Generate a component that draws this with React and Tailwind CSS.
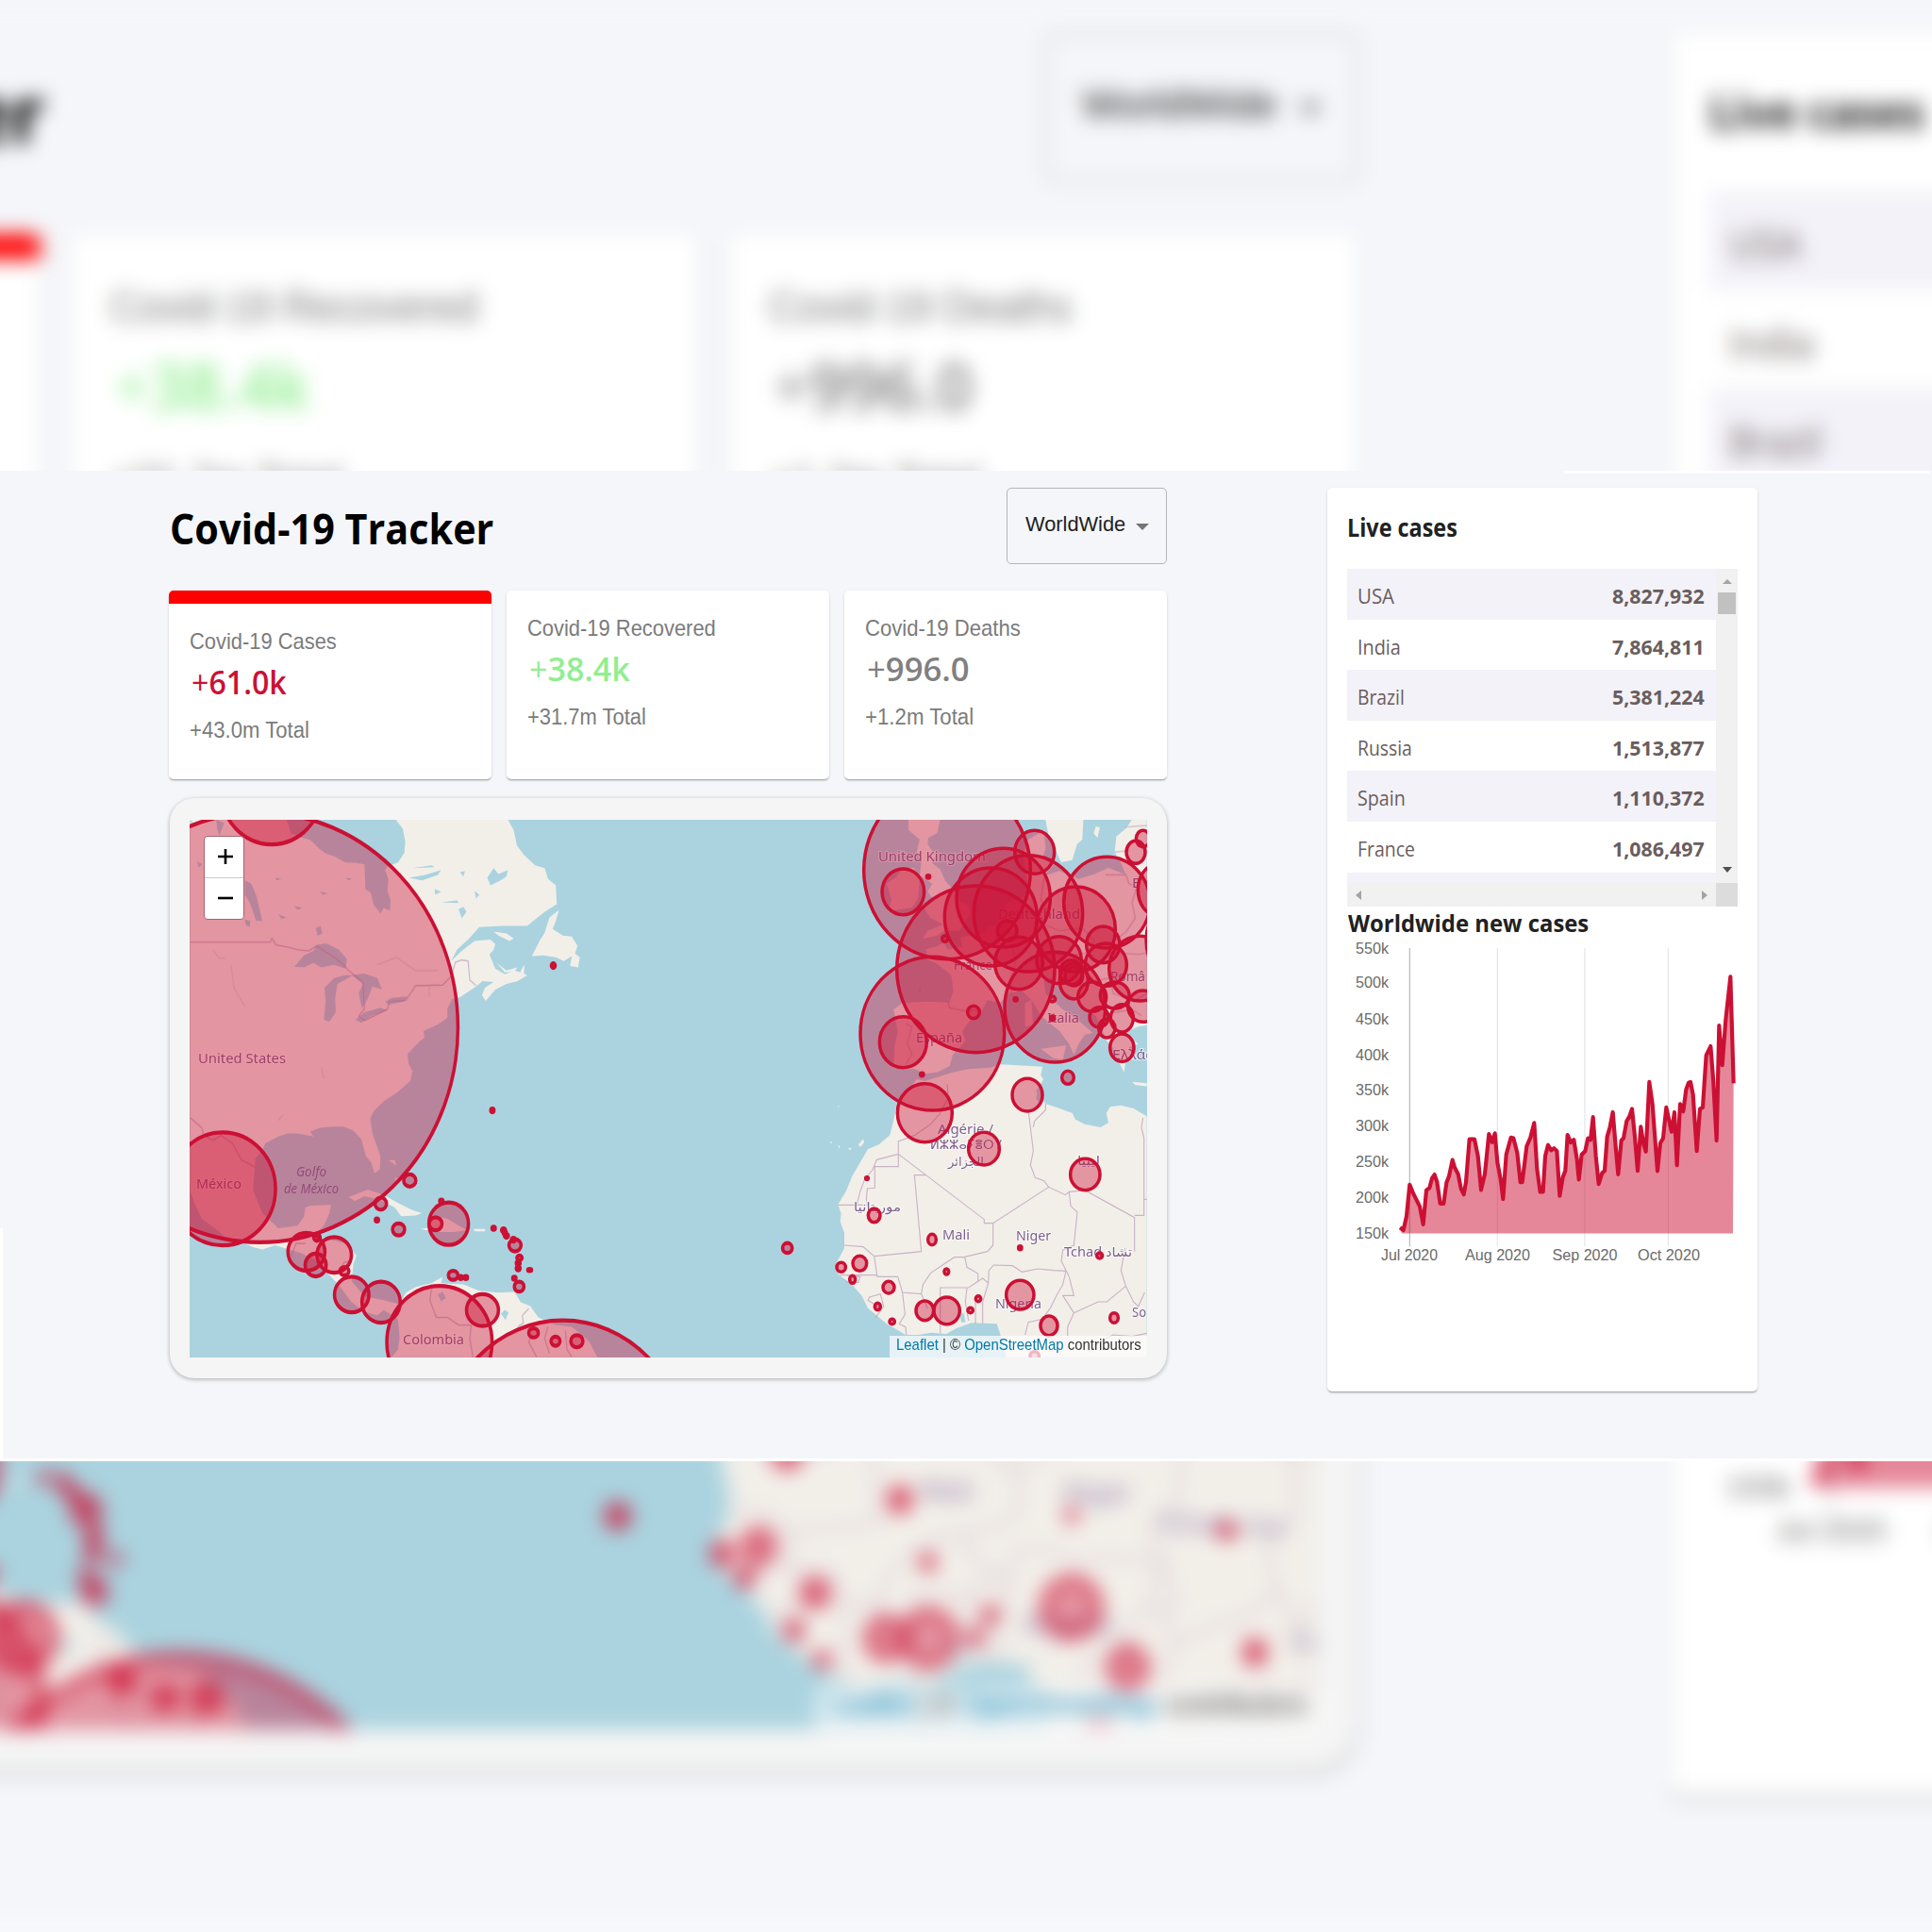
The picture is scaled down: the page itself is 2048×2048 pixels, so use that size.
import React, { useLayoutEffect, useRef } from "react";

/* A line of text squeezed or stretched horizontally to a known width. */
function Fit({ w, className = "", children }) {
  const ref = useRef(null);
  useLayoutEffect(() => {
    const el = ref.current;
    if (el && el.offsetWidth) el.style.transform = `scaleX(${w / el.offsetWidth})`;
  }, [w]);
  return (
    <div className="flex">
      <span ref={ref} className={"inline-block origin-left whitespace-nowrap " + className}>
        {children}
      </span>
    </div>
  );
}

function Card({ title, titleW, value, valueW, total, totalW, color, active }) {
  return (
    <div
      className={
        "h-[200px] flex-1 rounded-[5px] bg-white pl-[22px] shadow-[0_2px_2px_-1px_rgba(0,0,0,0.3),0_1px_3px_rgba(0,0,0,0.12)] " +
        (active ? "border-t-[14px] border-[#ff0000]" : "")
      }
    >
      <div className="h-[26px] pt-[27px] box-content font-['Liberation_Sans',sans-serif] text-[24px] leading-[26px] text-[#7b7b7b]">
        <Fit w={titleW}>{title}</Fit>
      </div>
      <div className={"mt-[8px] ml-[2px] font-['Open_Sans',sans-serif] text-[35px] font-semibold leading-[44px] " + color}>
        <Fit w={valueW}>
          <span className="font-normal">+</span>
          {value}
        </Fit>
      </div>
      <div className="mt-[16px] font-['Liberation_Sans',sans-serif] text-[23px] leading-[26px] text-[#7b7b7b]">
        <Fit w={totalW}>{total}</Fit>
      </div>
    </div>
  );
}

const AMERICAS = [
  [311, 620, 622, 567], [349, -7, 160, 144], [195, 1046, 166, 149], [458, 1212, 58, 50], [491, 1174, 10, 9],
  [545, 1220, 54, 47], [487, 1247, 33, 30], [577, 1263, 14, 11], [600, 1325, 54, 47], [692, 1345, 60, 54],
  [875, 1451, 165, 149], [1010, 1366, 50, 42], [1262, 1739, 384, 346], [782, 1024, 19, 16], [691, 1085, 18, 16],
  [679, 1128, 5, 4], [747, 1153, 19, 16], [881, 1078, 5, 4], [904, 1138, 62, 56], [863, 1138, 20, 17],
  [1045, 1150, 5, 4], [1076, 1155, 6, 5], [1085, 1170, 6, 5], [1080, 1162, 5, 4], [1112, 1195, 19, 16], [1107, 1180, 6, 5],
  [1126, 1228, 8, 6], [1122, 1242, 6, 5], [1122, 1256, 6, 5], [1158, 1260, 6, 3], [1110, 1282, 5, 4], [1125, 1304, 15, 13],
  [918, 1274, 15, 12], [942, 1280, 6, 4], [958, 1280, 5, 4], [1170, 1426, 15, 12], [1239, 1448, 14, 12],
  [1306, 1448, 19, 16], [1232, 457, 6, 6], [1041, 839, 5, 5], [1966, 1202, 15, 13],
];
const EUROPE = [
  [432, 247, 265, 283], [292, 316, 67, 73], [372, 268, 5, 5], [710, 190, 63, 69], [611, 335, 149, 157],
  [571, 396, 147, 156], [690, 385, 173, 185], [523, 562, 251, 265], [385, 767, 229, 244], [292, 794, 75, 81],
  [775, 683, 160, 175], [660, 543, 76, 83], [623, 440, 31, 32], [788, 533, 71, 75], [841, 435, 126, 135],
  [940, 350, 137, 145], [928, 484, 53, 58], [937, 548, 66, 68], [827, 572, 36, 39], [835, 600, 45, 57],
  [835, 585, 28, 30], [893, 650, 45, 47], [1045, 560, 98, 103], [965, 645, 46, 42], [915, 715, 30, 32], [940, 750, 26, 30],
  [988, 718, 36, 44], [1055, 680, 48, 50], [988, 812, 38, 44], [1032, 190, 30, 36], [1055, 147, 22, 26],
  [1097, 310, 58, 80], [1200, 470, 135, 150], [425, 465, 9, 10], [650, 658, 5, 5], [767, 657, 9, 9],
  [767, 718, 6, 7], [516, 699, 19, 20], [352, 897, 5, 5], [816, 907, 19, 21],
];
const AFRICA = [
  [687, 62, 48, 52], [361, 119, 87, 93], [549, 233, 49, 52], [871, 315, 47, 50], [177, 327, 4, 4], [200, 445, 19, 22],
  [384, 522, 13, 17], [664, 548, 5, 6], [917, 573, 9, 9], [154, 598, 22, 24], [95, 610, 14, 15], [131, 649, 9, 12],
  [246, 674, 18, 19], [211, 735, 9, 11], [257, 783, 8, 8], [361, 748, 28, 31], [431, 748, 41, 43], [430, 624, 7, 9],
  [506, 747, 8, 8], [531, 710, 8, 9], [664, 698, 44, 46], [756, 796, 27, 31], [963, 771, 13, 16], [710, 892, 14, 14],
];

const LABELS = [
  ["United States", 210, 1127, 93], ["México", 208, 1260, 48], ["Colombia", 427, 1425, 65], ["United Kingdom", 931, 913, 114],
  ["Deutschland", 1058, 974, 87], ["France", 1011, 1028, 41], ["España", 971, 1105, 49], ["Italia", 1110, 1084, 34],
  ["Româ", 1177, 1040, 37], ["E", 1200, 941, 9], ["Ελλάς", 1179, 1123, 43], ["Algérie /", 994, 1202, 59],
  ["ⵍⵣⵣⴰⵢⴻⵔ /", 986, 1218, 76], ["الجزائر", 1005, 1236, 38], ["ليبيا", 1142, 1235, 24], ["موريتانيا", 905, 1284, 50],
  ["Mali", 999, 1314, 29], ["Niger", 1077, 1315, 37], ["Tchad تشاد", 1128, 1332, 72], ["Nigeria", 1055, 1387, 49],
  ["So", 1200, 1396, 15],
];

function Circles({ list }) {
  return list.map(([cx, cy, rx, ry], i) => (
    <ellipse key={i} cx={cx} cy={cy} rx={rx} ry={ry} fill="#CC1034" fillOpacity="0.4" stroke="#CC1034" strokeWidth="10.5" />
  ));
}

const GA = "translate(170 840) scale(.33807 .40177)";
const GB = "translate(860 840) scale(.33333)";
const GC = "translate(860 1140) scale(.33333)";

function WorldMap() {
  return (
    <svg className="block h-[570px] w-[1015px] overflow-hidden" viewBox="201 869 1015 570">
      <rect x="201" y="869" width="1015" height="570" fill="#aad3df" />
      <g transform={GA} fill="#f2efe9">
        <path d="M93 72H395L410 108L440 118L470 125L500 150L520 162L545 168L580 185L615 186L640 190L643 255L660 265L668 295L690 320L700 305L720 312L722 285L712 260L715 230L705 205L712 195L745 185L765 160L768 130L760 95L738 72H1090L1108 100L1118 140L1140 165L1175 192L1205 200L1215 228L1240 245L1243 295L1205 315L1150 352L1070 352L1000 355L965 388L930 415L912 445L945 418L985 392L1035 388L1050 400L1045 415L1032 428L1050 465L1080 480L1110 470L1128 475L1142 453L1140 478L1150 483L1120 498L1085 505L1050 520L1020 550L1008 535L1018 515L1045 500L1010 498L990 512L940 540L915 545L900 570L900 595L870 612L825 630L828 648L815 655L800 668L775 690L778 715L790 735L785 760L745 790L700 815L670 840L658 860L665 900L690 960L688 995L672 1005L660 975L645 960L630 915L605 892L575 882L540 882L500 885L470 895L480 908L430 900L400 900L370 908L330 925L315 950L298 965L290 1050L320 1110L370 1150L430 1143L450 1120L455 1095L470 1090L535 1088L530 1110L515 1140L490 1165L500 1180L545 1182L580 1190L615 1222L605 1245L600 1290L640 1330L700 1340L750 1350L770 1320L800 1305L850 1295L885 1278L880 1295L950 1298L1000 1315L1060 1320L1110 1318L1130 1345L1160 1355L1185 1385L1240 1405L1290 1410L1320 1430L1345 1450L1370 1490H725L745 1470L750 1440L745 1390L700 1365L680 1380L640 1370L600 1345L560 1300L520 1265L480 1230L440 1215L400 1205L360 1195L320 1206L290 1200L250 1185L200 1172L180 1155L130 1125L108 1085L93 1050Z" />
        <path d="M1250 310L1220 330L1205 370L1190 390L1165 432L1200 430L1240 435L1265 445L1290 432L1285 458L1310 462L1315 435L1300 425L1308 405L1290 380L1262 378L1230 360L1240 340ZM1045 367L1085 372L1108 385L1095 392L1060 378ZM1055 450L1085 470L1120 462L1110 473L1080 475ZM590 1068L650 1048L700 1062L750 1085L790 1102L820 1110L800 1116L755 1118L735 1095L690 1075L640 1065L610 1078ZM840 1130L865 1118L900 1125L930 1140L960 1155L920 1160L870 1160L815 1152L845 1148ZM983 1152L1018 1152L1018 1158L985 1158ZM715 970L735 970L740 985ZM735 1015L745 1020L738 1035Z" />
      </g>
      <g transform={GB} fill="#f2efe9">
        <path d="M308 87H410L400 130L372 145L370 165L395 200L385 225L410 245L425 280L460 320L470 345L500 360L505 385L490 410L470 440L420 440L400 455L355 465L370 440L420 420L380 400L360 370L390 345L370 315L385 290L345 265L350 220L335 190L345 150L310 120ZM240 290L270 270L290 240L325 240L345 270L340 335L320 365L245 378L255 340Z" />
        <path d="M365 498L400 490L420 478L435 500L480 490L475 460L540 450L560 430L590 420L610 380L620 350L680 330L690 300L680 240L672 200L690 150L740 120L745 180L735 210L770 230L740 265L790 250L850 275L900 260L945 240L1000 262L985 225L965 190L970 140L1000 115L1020 87H1067V740L1040 745L1015 755L1000 765L1040 800L1010 810L1025 850L1000 850L995 890L975 850L965 820L940 790L925 755L905 710L870 690L830 650L790 620L765 590L740 600L745 640L800 690L850 725L895 765L870 770L850 800L835 835L820 800L790 760L735 715L700 660L670 630L625 640L600 670L560 660L540 700L500 730L480 760L490 790L450 835L440 870L400 890L360 895L330 880L262 875L265 810L275 760L262 690L290 670L370 665L440 668L452 630L445 580L400 545L370 530Z" />
        <path d="M745 87H865L862 150L845 165L830 215L795 222L775 180L755 140ZM905 108L918 112L910 145L898 130ZM680 670L700 660L705 740L680 745ZM730 815L810 805L800 850L770 845ZM1020 920L1067 925V935L1030 930Z" />
      </g>
      <g transform={GC} fill="#f2efe9">
        <path d="M335 12L360 18L450 -10L500 -20L570 -25L600 -35L735 -28L730 0L738 12L715 50L745 90L790 105L830 120L840 140L870 155L920 165L945 150L938 120L950 100L985 95L1025 105L1067 130V896H620L600 820L590 790L510 787L460 805L430 822L380 818L340 825L300 825L240 790L180 740L160 700L125 660L88 635L78 600L105 550L105 500L92 465L95 440L85 410L110 370L130 320L180 235L215 220L250 190L260 150L275 80L300 60Z" />
        <path d="M60 210L66 212L62 218ZM85 222L92 225L88 232ZM118 230L130 232L120 238ZM150 220L165 202L168 212L156 228ZM82 98L88 97L88 101Z" />
        <path d="M720 50L742 70L730 90L715 75ZM470 760L485 755L490 785L478 785Z" fill="#aad3df" />
      </g>
      <g transform={GA} fill="#aad3df">
        <path d="M420 460L450 430L480 418L490 402L520 398L560 415L585 440L580 465L545 455L505 462L480 450L450 462ZM515 515L545 490L580 482L605 482L555 505L548 545L550 580L530 605L513 600L518 550ZM600 482L640 478L680 490L695 520L665 512L650 545L632 570L622 530L635 505ZM612 600L640 580L690 568L712 575L660 590L630 608ZM705 552L725 542L775 538L765 552L715 560ZM265 232L285 240L300 270L320 340L300 338L280 290L265 270ZM265 335L282 340L280 355L268 350ZM488 358L502 352L508 372L492 378ZM93 72L110 85L100 90ZM175 72L200 80L185 115L178 95ZM115 182L132 190L120 198ZM870 1325L885 1318L895 1335L880 1342Z" />
        <path d="M1025 225L1045 200L1060 215L1090 205L1085 222L1060 235L1035 245ZM935 308L950 302L960 315L945 332ZM1068 1375L1080 1365L1092 1372L1082 1392ZM780 225L830 218L880 205L870 218L820 232ZM790 200L850 192L860 197ZM880 290L930 285L935 292ZM940 210L955 208L950 222ZM360 225L380 228L365 232ZM420 300L445 304L430 310ZM500 262L525 266L510 270ZM370 322L395 330L380 334ZM580 225L600 228L590 232ZM400 245L412 248ZM860 255L880 262L862 270ZM985 260L1000 270L990 280ZM700 130L720 125L718 155L705 150Z" />
      </g>
      <g fill="none" stroke="#b89ab8" strokeWidth="3.4" opacity="0.7">
        <g transform={GA}>
          <path d="M93 395H345L350 385L362 402L400 408L430 415L465 418L490 405L545 435L575 455L590 470L635 500L640 570L622 590L640 602L712 572L718 552L770 548L800 510L885 508L912 485L925 448L945 442L965 445L970 495L990 510M93 858L130 885L135 905L165 918L190 905L225 925L255 970L295 988M410 1225L425 1190L455 1190M565 1262L575 1240L600 1235M850 1310L845 1340L865 1385L900 1385L935 1405H975L970 1440L980 1490M1155 1362L1135 1380L1138 1400L1120 1410M1165 1430L1155 1450L1180 1490M1215 1410L1205 1440L1220 1480M1270 1420L1275 1470L1290 1490" />
          <path opacity=".4" d="M165 415L185 438L205 438M222 455L230 515L265 565M505 725L512 755M680 455L740 435L800 470L870 470M843 510V540M370 865L385 850" />
        </g>
        <g transform={GB}>
          <path d="M434 665L440 685L490 695L540 690M300 735L320 745L305 800L320 830L300 865M600 450L640 490L650 540L630 600L640 650M740 270L730 340L760 390L740 420L790 440L860 430L900 470L880 510L820 520L760 510M935 262H1000L1010 290L1035 300L1020 350L1030 400L1000 445L950 480M880 560L920 540L970 510L1040 515L1067 510M900 600L950 590L960 640L1030 660L1067 640M960 700L1020 690L1050 710M965 190L1010 185M1000 110L1067 105M345 620V640" />
        </g>
        <g transform={GC}>
          <path d="M432 28L436 70L410 120L380 155L330 190L277 210V290H202V358L178 360L175 395L180 412H85M277 250L208 268L195 300L170 330L155 370L145 410M277 250L550 458V470H578L755 355L808 380L820 370L870 365L1028 452V560M690 110L700 190L706 240L697 285L712 325L740 335L755 355M745 90V110L710 145L706 165M1055 135L1050 165L1058 200V445H1028M1058 394H1067M365 317H328L350 560L200 575L165 545L105 540M578 470V540L560 560L488 577L455 578L380 628L355 665L350 695L290 690L275 640L210 640L200 575M90 635H210M488 577L495 610L530 630V655L500 675H410V820M495 675L490 720L500 780M530 655L545 645L563 660L545 720V790M522 720V790M563 660L565 620L580 603L640 605L670 625L720 615L770 620L810 622L800 665L780 700L760 740L735 775L690 785L680 825M820 370L825 415L846 435L835 540L800 555L795 590L820 640L835 700L800 700L835 755L912 720H940L1000 670L985 620L998 550M835 755L815 800V830M1000 670L1025 720L1040 735L1060 690M290 690L298 760L280 790L300 800L302 825M220 740L180 715L185 705L220 695L230 735L205 770M1067 820L1020 830L960 825L930 840L880 880M350 695L370 740M110 635L155 640L150 658L110 657" />
        </g>
      </g>
      <g fontFamily="Noto Sans, DejaVu Sans, sans-serif" fontSize="13.5" fill="#7d5f8c" stroke="#ffffff" strokeOpacity=".6" strokeWidth="2" paintOrder="stroke">
        {LABELS.map(([t, x, y, w]) => (
          <text key={t} x={x} y={y} textLength={w} lengthAdjust="spacingAndGlyphs">{t}</text>
        ))}
        <g fontStyle="italic" fill="#6f70ab" strokeOpacity="0">
          <text x="314" y="1247" textLength="32" lengthAdjust="spacingAndGlyphs">Golfo</text>
          <text x="301" y="1265" textLength="58" lengthAdjust="spacingAndGlyphs">de México</text>
        </g>
      </g>
      <g transform={GA}><Circles list={AMERICAS} /></g>
      <g transform={GB}><Circles list={EUROPE} /></g>
      <g transform={GC}><Circles list={AFRICA} /></g>
    </svg>
  );
}

function MapCard() {
  return (
    <div className="mt-[20px] ml-px h-[615px] w-[1057px] rounded-[26px] bg-[#f5f5f5] pt-[23px] pl-[21px] shadow-[0_1px_5px_rgba(0,0,0,0.22),0_2px_4px_rgba(0,0,0,0.08)]">
      <div className="relative h-[570px] w-[1015px] overflow-hidden">
        <WorldMap />
        <div className="absolute top-[17px] left-[15px] h-[89px] w-[43px] divide-y divide-[#cccccc] rounded-[4px] border border-[#a8626f] bg-white">
          {["M1 8H17M9 0V16", "M1 8H17"].map((d) => (
            <div key={d} className="flex h-[43.5px] items-center justify-center pl-[3px]">
              <svg className="h-[16px] w-[18px]" viewBox="0 0 18 16" fill="none" stroke="#000" strokeWidth="2.6">
                <path d={d} />
              </svg>
            </div>
          ))}
        </div>
        <div className="absolute right-0 bottom-0 h-[23px] w-[273px] bg-white/70 pl-[7px] font-['Liberation_Sans',sans-serif] text-[17px] leading-[20px] text-[#333333]">
          <Fit w={260}>
            <span className="text-[#0078a8]">Leaflet</span> | © <span className="text-[#0078a8]">OpenStreetMap</span> contributors
          </Fit>
        </div>
      </div>
    </div>
  );
}

const ROWS = [
  ["USA", "8,827,932", 39], ["India", "7,864,811", 46], ["Brazil", "5,381,224", 50], ["Russia", "1,513,877", 58],
  ["Spain", "1,110,372", 51], ["France", "1,086,497", 61],
];

function CasesTable() {
  return (
    <div className="ml-[21px] h-[358px] w-[414px] font-['Open_Sans',sans-serif] text-[#6a5d5d]">
      <div className="flex h-[333px]">
        <div className="w-[391px] overflow-hidden">
          {ROWS.map(([name, n, w], i) => (
            <div key={name} className={"flex h-[53.6px] justify-between pt-[8px] pr-[12px] pl-[11px] text-[22px] leading-[40px] " + (i % 2 ? "bg-white" : "bg-[#f3f2f8]")}>
              <Fit w={w}>{name}</Fit>
              <div className="w-[98px] font-bold"><Fit w={98}>{n}</Fit></div>
            </div>
          ))}
          <div className="h-[12px] bg-[#f3f2f8]" />
        </div>
        <div className="flex w-[23px] flex-col items-center bg-[#f1f1f1]">
          <svg className="mt-[11px] h-[5px] w-[10px]" viewBox="0 0 10 5"><path d="M0 5L5 0L10 5Z" fill="#a3a3a3" /></svg>
          <div className="mt-[9px] h-[23px] w-[19px] bg-[#c1c1c1]" />
          <svg className="mt-[268px] h-[6px] w-[10px]" viewBox="0 0 10 6"><path d="M0 0H10L5 6Z" fill="#505050" /></svg>
        </div>
      </div>
      <div className="flex h-[25px]">
        <div className="flex w-[391px] items-center justify-between bg-[#f1f1f1] px-[9px]">
          <svg className="h-[10px] w-[6px]" viewBox="0 0 6 10"><path d="M6 0V10L0 5Z" fill="#a3a3a3" /></svg>
          <svg className="h-[10px] w-[6px]" viewBox="0 0 6 10"><path d="M0 0V10L6 5Z" fill="#a3a3a3" /></svg>
        </div>
        <div className="w-[23px] bg-[#dcdcdc]" />
      </div>
    </div>
  );
}

const SERIES =
  "282,1020 293,1028 303,985 313,888 322,910 345,955 356,1010 366,905 376,898 384,868 392,857 400,880 410,946 421,946 430,882 438,862 449,812 456,835 467,855 476,900 485,918 492,880 503,748 519,748 530,800 540,904 552,855 565,732 575,757 584,730 592,820 602,870 610,932 620,795 635,743 643,745 655,790 665,880 671,880 685,770 697,743 709,698 718,840 728,910 737,910 744,800 753,766 763,782 772,776 781,784 790,922 800,865 808,845 815,735 825,758 835,750 845,810 851,872 860,795 871,785 880,745 888,750 896,680 905,800 914,886 925,852 933,845 941,740 950,710 959,665 968,770 976,856 986,752 993,745 1003,692 1012,678 1020,655 1029,740 1038,845 1048,710 1056,760 1064,786 1075,572 1085,640 1101,846 1110,760 1119,745 1129,650 1138,690 1146,725 1155,665 1163,828 1173,640 1183,662 1192,595 1200,574 1206,572 1214,610 1226,784 1236,655 1245,650 1256,490 1270,462 1278,560 1289,752 1297,398 1307,520 1318,380 1333,248 1343,576";

function Chart() {
  return (
    <svg className="block h-[360px] w-[455px]" viewBox="1407 991 455 360">
      <g transform="translate(1390 950) scale(.33333 .34439)">
        <path d="M592 160V1078M870 160V1078M1135 160V1078" stroke="#e5e5e5" strokeWidth="3.5" />
        <path d="M313 160V1078" stroke="#b8b8b8" strokeWidth="3.6" />
        <polygon points={"288,1038 " + SERIES + " 1341,1038"} fill="#CC1034" fillOpacity="0.5" />
        <polyline points={SERIES} fill="none" stroke="#CC1034" strokeWidth="12.5" strokeLinejoin="round" />
      </g>
      <g fontFamily="Liberation Sans, sans-serif" fontSize="16.5" fill="#6b6b6b">
        {[1010.5, 1047, 1085.5, 1123.5, 1161, 1198.5, 1236.5, 1275, 1312.5].map((y, i) => (
          <text key={y} x="1437" y={y} textLength="35" lengthAdjust="spacingAndGlyphs">{550 - i * 50}k</text>
        ))}
        {[["Jul 2020", 1464, 60], ["Aug 2020", 1553, 69], ["Sep 2020", 1645.5, 69], ["Oct 2020", 1736, 66]].map(([t, x, w]) => (
          <text key={t} x={x} y="1336" textLength={w} lengthAdjust="spacingAndGlyphs">{t}</text>
        ))}
      </g>
    </svg>
  );
}

function Dashboard() {
  return (
    <div className="flex h-[1050px] w-[2048px] flex-col bg-[#f5f6fa]">
      <div className="flex h-[3px] justify-end pr-[3px]">
        <div className="w-[387px] bg-white" />
      </div>
      <div className="flex h-[1044px] pt-[15px]">
        <div className="mt-[785px] -mb-px w-[3px] shrink-0 bg-white" />
        <div className="ml-[176px] w-[1058px] shrink-0">
          <div className="flex h-[109px] justify-between">
            <h1 className="ml-px pt-[13px] font-['Open_Sans',sans-serif] text-[44px] font-bold leading-[60px] text-black">
              <Fit w={343}>Covid-19 Tracker</Fit>
            </h1>
            <div className="flex h-[81px] w-[170px] rounded-[5px] border border-[#b4b5b8] pl-[19px]">
              <div className="w-[117px] pt-[24px] font-['Liberation_Sans',sans-serif] text-[22px] leading-[28px] text-[#212121]">
                <Fit w={106}>WorldWide</Fit>
              </div>
              <svg className="mt-[37px] h-[7px] w-[14px]" viewBox="0 0 14 7"><path d="M0 0H14L7 7Z" fill="#757575" /></svg>
            </div>
          </div>
          <div className="flex gap-[15.5px]">
            <Card active title="Covid-19 Cases" titleW={156} value="61.0k" valueW={101} total="+43.0m Total" totalW={127} color="text-[#CC1034]" />
            <Card title="Covid-19 Recovered" titleW={200} value="38.4k" valueW={107} total="+31.7m Total" totalW={126} color="text-[#90ee90]" />
            <Card title="Covid-19 Deaths" titleW={165} value="996.0" valueW={109} total="+1.2m Total" totalW={115} color="text-[#808080]" />
          </div>
          <MapCard />
        </div>
        <div className="ml-[170px] h-[958px] w-[456px] shrink-0 rounded-[5px] bg-white shadow-[0_2px_2px_-1px_rgba(0,0,0,0.3),0_1px_3px_rgba(0,0,0,0.12)]">
          <h3 className="h-[86px] pt-[21px] pl-[21px] font-['Open_Sans',sans-serif] text-[26px] font-bold leading-[42px] text-[#212121]">
            <Fit w={117}>Live cases</Fit>
          </h3>
          <CasesTable />
          <h3 className="h-[30px] pl-[22px] font-['Open_Sans',sans-serif] text-[25px] font-bold leading-[34px] text-[#212121]">
            <Fit w={255}>Worldwide new cases</Fit>
          </h3>
          <Chart />
        </div>
      </div>
      <div className="h-[3px] bg-white" />
    </div>
  );
}

export default function App() {
  return (
    <div className="relative h-[2048px] w-[2048px] overflow-hidden bg-[#f5f6fa]">
      <div aria-hidden="true" className="absolute inset-0 overflow-hidden">
        <div className="h-[1050px] w-[2048px] origin-top scale-[1.9505] blur-[5.5px]">
          <Dashboard />
        </div>
      </div>
      <div className="relative pt-[499px]">
        <Dashboard />
      </div>
    </div>
  );
}
